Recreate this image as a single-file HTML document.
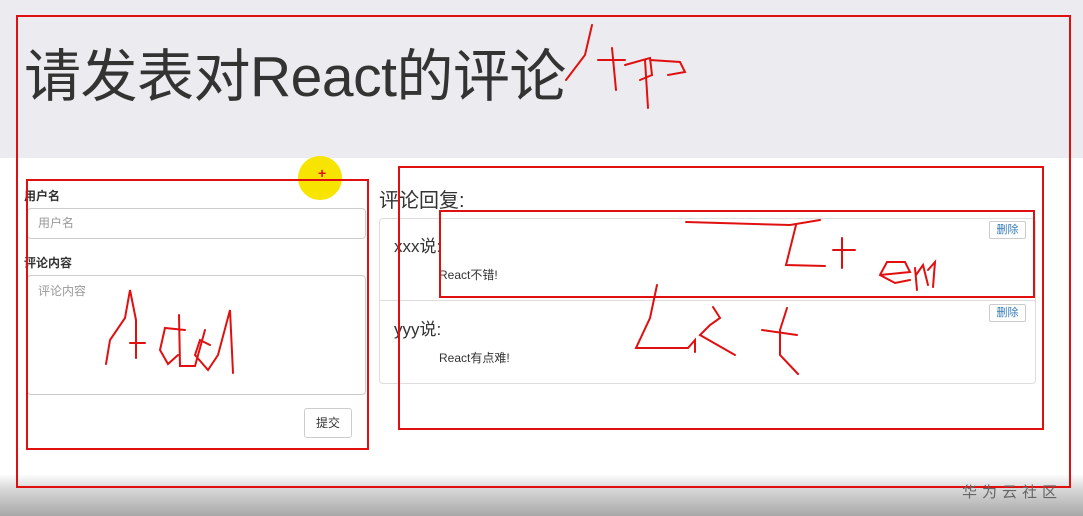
<!DOCTYPE html>
<html><head><meta charset="utf-8"><style>
body{margin:0;width:1083px;height:516px;position:relative;overflow:hidden;background:#fff;font-family:"Liberation Sans","Noto Sans CJK SC",sans-serif;color:#333}
.hdr{position:absolute;left:0;top:0;width:1083px;height:158px;background:#ececf0}
.title{position:absolute;left:24px;top:44px;font-size:57px;line-height:66px;color:#333;white-space:nowrap;letter-spacing:-0.5px}
.abs{position:absolute}
.lbl{font-size:12px;font-weight:bold;color:#333}
.inp{border:1px solid #ccc;border-radius:4px;background:#fff;box-sizing:border-box;color:#999;font-size:12px;padding:0 10px}
.rb{position:absolute;border:2px solid #e01010;box-sizing:border-box}
.btn{border:1px solid #ccc;border-radius:3px;font-size:12px;color:#333;text-align:center;background:#fff;box-sizing:border-box}
.del{border:1px solid #ccc;border-radius:2px;font-size:11px;color:#337ab7;text-align:center;box-sizing:border-box;background:#fff}
.bot{position:absolute;left:0;top:474px;width:1083px;height:42px;background:linear-gradient(#fff,#d8d8d8 35%,#a8a8a8)}
</style></head><body>
<div class="hdr"></div>
<div class="bot"></div>
<div class="title">请发表对React的评论</div>

<div class="abs lbl" style="left:24px;top:187px">用户名</div>
<div class="abs inp" style="left:27px;top:208px;width:339px;height:31px;line-height:29px">用户名</div>
<div class="abs lbl" style="left:24px;top:254px">评论内容</div>
<div class="abs inp" style="left:27px;top:275px;width:339px;height:120px;padding-top:6px">评论内容</div>
<div class="abs btn" style="left:304px;top:408px;width:48px;height:30px;line-height:28px">提交</div>

<div class="abs" style="left:379px;top:184px;font-size:20px;color:#333">评论回复:</div>
<div class="abs" style="left:379px;top:218px;width:657px;height:166px;border:1px solid #ddd;border-radius:4px;box-sizing:border-box"></div>
<div class="abs" style="left:380px;top:300px;width:655px;height:1px;background:#ddd"></div>
<div class="abs" style="left:394px;top:232px;font-size:17px">xxx说:</div>
<div class="abs" style="left:439px;top:266px;font-size:12px">React不错!</div>
<div class="abs del" style="left:989px;top:221px;width:37px;height:18px;line-height:16px">删除</div>
<div class="abs" style="left:394px;top:315px;font-size:17px">yyy说:</div>
<div class="abs" style="left:439px;top:349px;font-size:12px">React有点难!</div>
<div class="abs del" style="left:989px;top:304px;width:37px;height:18px;line-height:16px">删除</div>

<div class="abs" style="left:298px;top:156px;width:44px;height:44px;border-radius:50%;background:#f7e400"></div>
<div class="abs" style="left:318px;top:165px;color:#e01010;font-size:14px;font-weight:bold">+</div>

<div class="rb" style="left:16px;top:15px;width:1055px;height:473px"></div>
<div class="rb" style="left:26px;top:179px;width:343px;height:271px"></div>
<div class="rb" style="left:398px;top:166px;width:646px;height:264px"></div>
<div class="rb" style="left:439px;top:210px;width:596px;height:88px"></div>

<svg class="abs" style="left:0;top:0" width="1083" height="516" fill="none" stroke="#e01010" stroke-width="2" stroke-linecap="round">
<path d="M566 80 L585 55 L592 25 M598 60 L625 60 M612 48 L616 90 M625 65 L650 58 L652 75 L640 80 M645 60 L648 108 M650 60 L680 62 L685 72 L668 75"/>
<path d="M106 364 L110 340 L125 318 L130 290 L136 320 L136 358 M130 343 L145 343 M185 330 L165 328 L160 350 L168 364 L178 355 M179 315 L180 366 L195 366 L205 330 M210 345 L200 340 L195 355 L208 370 L218 355 L230 310 L233 373"/>
<path d="M686 222 L790 225 L820 220 M796 225 L786 265 L825 266 M833 250 L855 250 M842 238 L842 268 M880 275 L910 272 L905 262 L887 262 L880 275 L895 283 L910 280 M915 268 L917 290 M916 275 L923 265 L928 285 M928 270 L935 262 L933 287"/>
<path d="M657 285 L650 318 L636 348 L688 348 L695 340 L695 352 M713 307 L720 318 L710 325 L700 335 L735 355 M762 330 L797 335 M787 308 L780 330 L780 355 L798 374"/>
</svg>

<div class="abs" style="left:962px;top:481px;font-size:15px;color:#666;letter-spacing:5px">华为云社区</div>
</body></html>
